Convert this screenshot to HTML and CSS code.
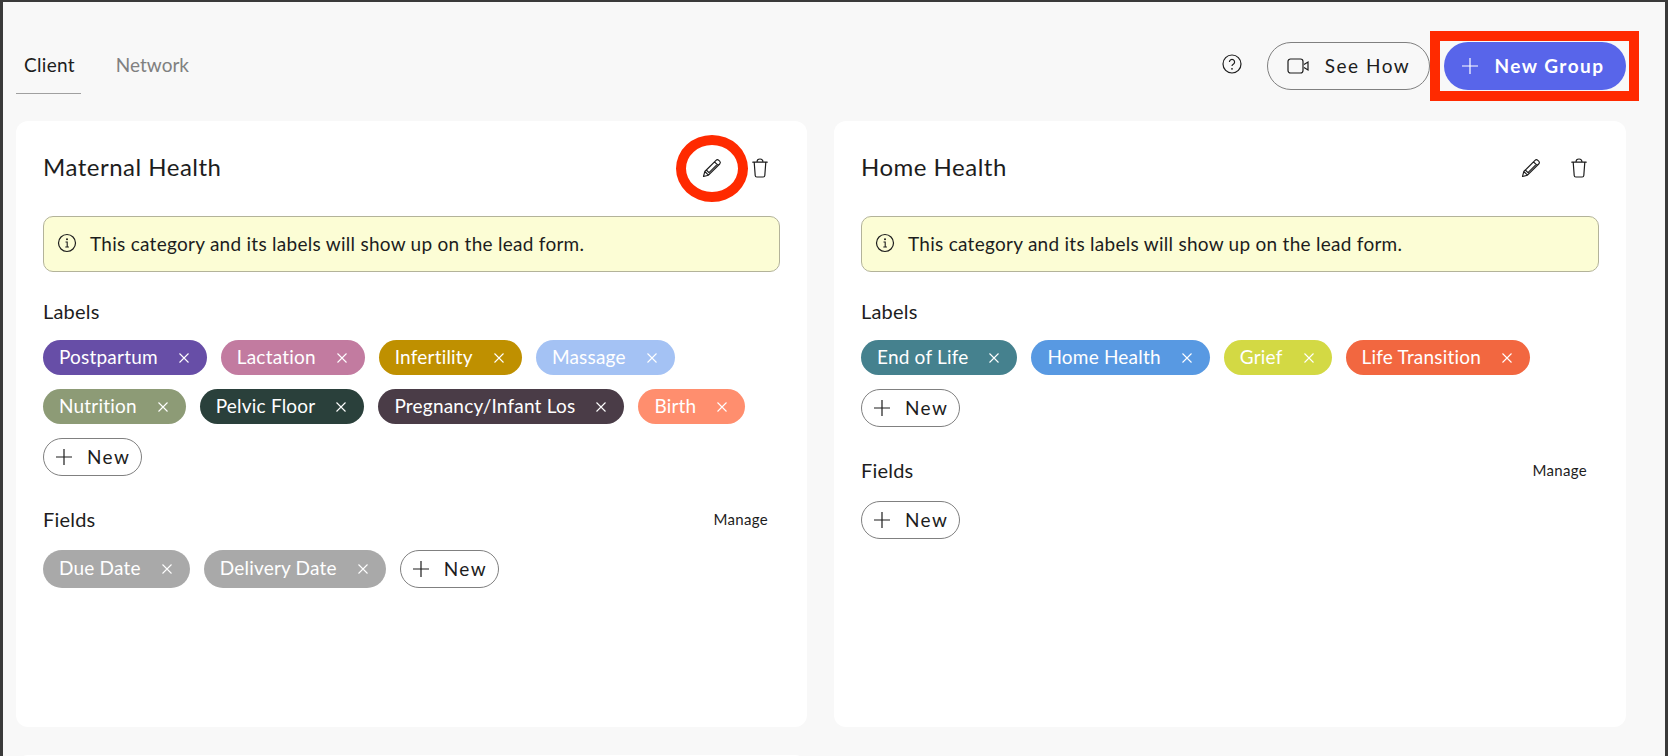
FILE: index.html
```html
<!DOCTYPE html>
<html lang="en">
<head>
<meta charset="utf-8">
<title>Groups</title>
<link rel="stylesheet" href="styles.css">
</head>
<body>
<svg class="defs" width="0" height="0" aria-hidden="true">
  <symbol id="i-x" viewBox="0 0 12 12"><path d="M1.5 1.5l9 9M10.500 1.500l-9 9" fill="none" stroke="currentColor" stroke-width="1.100"/></symbol>
  <symbol id="i-plus" viewBox="0 0 18 18"><path d="M9 1v16M1 9h16" fill="none" stroke="currentColor" stroke-width="1.200"/></symbol>
  <symbol id="i-info" viewBox="0 0 20 20"><circle cx="10" cy="10" r="8.500" fill="none" stroke="currentColor" stroke-width="1.200"/><path d="M8.500 9h1.700v5M8.300 14h3.600" fill="none" stroke="currentColor" stroke-width="1.100"/><circle cx="10" cy="6.200" r="1" fill="currentColor"/></symbol>
  <symbol id="i-pencil" viewBox="0 0 20 20"><path d="M1.500 18.500l1.300-5L14 2.300a2 2 0 0 1 2.800 0l.9.900a2 2 0 0 1 0 2.800L6.500 17.200zM2.800 13.500l3.700 3.700M4.300 12l3.700 3.700M12.500 3.800l3.700 3.700M5.400 11l7.900-7.900M7 14.700l8-8" fill="none" stroke="currentColor" stroke-width="1.100" stroke-linejoin="round"/></symbol>
  <symbol id="i-trash" viewBox="0 0 16 20"><path d="M.8 4.200h14.400M2.200 4.200l1 13.300a1.600 1.600 0 0 0 1.600 1.500h6.400a1.600 1.600 0 0 0 1.600-1.500l1-13.300M5 4.200C5 2 6 1 8 1s3 1 3 3.200" fill="none" stroke="currentColor" stroke-width="1.200" stroke-linecap="round"/></symbol>
</svg>
<div class="app">
  <header class="topbar">
    <nav class="tabs">
      <a class="tab tab-active">Client</a>
      <a class="tab">Network</a>
    </nav>
    <div class="actions">
      <svg class="help" viewBox="0 0 20 20"><circle cx="10" cy="10" r="9" fill="none" stroke="currentColor" stroke-width="1.200"/><path d="M7.400 7.900a2.600 2.600 0 1 1 3.900 2.300c-.9.500-1.300 1-1.300 1.900" fill="none" stroke="currentColor" stroke-width="1.200"/><circle cx="10" cy="14.800" r=".9" fill="currentColor"/></svg>
      <button class="btn btn-outline">
        <svg class="cam" viewBox="0 0 24 18"><rect x="1" y="2" width="15" height="14" rx="2.500" fill="none" stroke="currentColor" stroke-width="1.200"/><path d="M17 7.500l4-2.500v8l-4-2.500" fill="none" stroke="currentColor" stroke-width="1.200"/></svg>
        See How
      </button>
      <button class="btn btn-primary"><svg class="plus"><use href="#i-plus"/></svg>New Group</button>
    </div>
  </header>

  <main class="cards">
    <section class="card">
      <div class="card-head">
        <h2 class="card-title">Maternal Health</h2>
        <div class="card-tools">
          <svg class="tool"><use href="#i-pencil"/></svg>
          <svg class="tool tool-trash"><use href="#i-trash"/></svg>
        </div>
      </div>
      <div class="notice"><svg class="info"><use href="#i-info"/></svg>This category and its labels will show up on the lead form.</div>
      <div class="sec-head"><span>Labels</span></div>
      <div class="chips">
        <span class="chip c-purple">Postpartum<svg class="x"><use href="#i-x"/></svg></span>
        <span class="chip c-pink">Lactation<svg class="x"><use href="#i-x"/></svg></span>
        <span class="chip c-gold">Infertility<svg class="x"><use href="#i-x"/></svg></span>
        <span class="chip c-sky">Massage<svg class="x"><use href="#i-x"/></svg></span>
        <span class="chip c-sage">Nutrition<svg class="x"><use href="#i-x"/></svg></span>
        <span class="chip c-forest">Pelvic Floor<svg class="x"><use href="#i-x"/></svg></span>
        <span class="chip c-plum">Pregnancy/Infant Los<svg class="x"><use href="#i-x"/></svg></span>
        <span class="chip c-coral">Birth<svg class="x"><use href="#i-x"/></svg></span>
        <button class="new"><svg class="plus"><use href="#i-plus"/></svg>New</button>
      </div>
      <div class="sec-head sec-fields"><span>Fields</span><a class="manage">Manage</a></div>
      <div class="chips">
        <span class="chip c-grey">Due Date<svg class="x"><use href="#i-x"/></svg></span>
        <span class="chip c-grey">Delivery Date<svg class="x"><use href="#i-x"/></svg></span>
        <button class="new"><svg class="plus"><use href="#i-plus"/></svg>New</button>
      </div>
    </section>

    <section class="card">
      <div class="card-head">
        <h2 class="card-title">Home Health</h2>
        <div class="card-tools">
          <svg class="tool"><use href="#i-pencil"/></svg>
          <svg class="tool tool-trash"><use href="#i-trash"/></svg>
        </div>
      </div>
      <div class="notice"><svg class="info"><use href="#i-info"/></svg>This category and its labels will show up on the lead form.</div>
      <div class="sec-head"><span>Labels</span></div>
      <div class="chips">
        <span class="chip c-teal">End of Life<svg class="x"><use href="#i-x"/></svg></span>
        <span class="chip c-blue">Home Health<svg class="x"><use href="#i-x"/></svg></span>
        <span class="chip c-lime">Grief<svg class="x"><use href="#i-x"/></svg></span>
        <span class="chip c-orange">Life Transition<svg class="x"><use href="#i-x"/></svg></span>
        <button class="new"><svg class="plus"><use href="#i-plus"/></svg>New</button>
      </div>
      <div class="sec-head sec-fields"><span>Fields</span><a class="manage">Manage</a></div>
      <div class="chips">
        <button class="new"><svg class="plus"><use href="#i-plus"/></svg>New</button>
      </div>
    </section>

    <section class="card"></section>
  </main>

  <div class="mark mark-box"></div>
  <div class="mark mark-ring"></div>
</div>
</body>
</html>
```

FILE: styles.css
```css
* { box-sizing: border-box; }
html, body { margin: 0; height: 100%; overflow: hidden; }
body { font-family: "Lato", "Liberation Sans", sans-serif; color: #1d1d1d; background: #f8f8f8; }
.defs { position: absolute; }
.app {
  position: relative;
  height: 756px;
  overflow: hidden;
  background: #f8f8f8;
  border-top: 2px solid #3a3a3a;
  border-left: 3px solid #3a3a3a;
  border-right: 3px solid #3a3a3a;
  padding: 0 39px 0 13px;
}
.topbar { display: flex; justify-content: space-between; align-items: flex-start; height: 119px; padding-top: 40px; }
.tabs { display: flex; }
.tab { display: block; font-size: 19px; height: 52px; padding: 11px 6px 0 8px; color: #808080; margin-right: 27px; }
.tab-active { color: #1d1d1d; border-bottom: 1px solid #a0a0a0; letter-spacing: .3px; }
.actions { display: flex; align-items: center; }
.help { width: 20px; height: 20px; margin-right: 25px; margin-top: -4px; color: #1d1d1d; }
.btn { display: flex; align-items: center; justify-content: center; height: 48px; padding: 0 0 2px; border-radius: 24px; font-family: inherit; font-size: 19px; letter-spacing: 1.500px; cursor: pointer; }
.btn-outline { width: 163px; background: transparent; border: 1px solid #808080; color: #1d1d1d; margin-right: 14px; }
.cam { width: 24px; height: 18px; margin-right: 14px; margin-top: 2px; }
.btn-primary { width: 182px; background: #5865ea; border: 0; color: #fff; font-weight: 700; padding-right: 4px; }
.btn-primary .plus { width: 18px; height: 18px; margin-right: 15px; margin-top: 2px; }
.cards { display: grid; grid-template-columns: 791px 792px; gap: 28px 27px; }
.card { height: 606px; background: #fff; border-radius: 12px; padding: 0 27px; }
.card-head { display: flex; justify-content: space-between; align-items: center; height: 95px; padding-bottom: 4px; }
.card-title { margin: 0; font-size: 24px; font-weight: 400; letter-spacing: .5px; }
.card-tools { display: flex; align-items: center; gap: 30px; margin-right: 12px; margin-top: 3px; }
.tool { width: 20px; height: 20px; display: block; }
.tool-trash { width: 16px; }
.notice { display: flex; align-items: center; height: 56px; background: #fcfdd5; border: 1px solid #b3b39a; border-radius: 10px; padding: 0 13px 2px; font-size: 19px; letter-spacing: .27px; }
.info { width: 20px; height: 20px; margin-right: 13px; flex: none; }
.sec-head { display: flex; justify-content: space-between; align-items: center; height: 22px; margin-top: 28px; margin-bottom: 18px; font-size: 20px; letter-spacing: .2px; }
.sec-fields { margin-top: 32px; margin-bottom: 20px; }
.manage { font-size: 15px; margin-right: 12px; letter-spacing: .3px; }
.chips { display: flex; flex-wrap: wrap; gap: 14px; }
.chip { display: flex; align-items: center; justify-content: space-between; min-height: 35px; padding: 0 17px 3px 16px; border-radius: 20px; color: #fff; font-size: 19px; letter-spacing: .2px; }
.x { width: 12px; height: 12px; margin-left: 20px; margin-top: 3px; flex: none; }
.new { display: flex; align-items: center; width: 99px; height: 38px; padding: 0 0 2px 11px; background: #fff; border: 1px solid #808080; border-radius: 20px; font-family: inherit; font-size: 19px; letter-spacing: 1.400px; color: #1d1d1d; cursor: pointer; }
.new .plus { width: 18px; height: 18px; margin-right: 14px; margin-top: 2px; }
.c-purple { background: #674ea7; }
.c-pink { background: #c27ba0; }
.c-gold { background: #bf9000; }
.c-sky { background: #a4c2f4; }
.c-sage { background: #8d9b76; }
.c-forest { background: #2a403b; }
.c-plum { background: #4a3c47; }
.c-coral { background: #ff8e6e; }
.c-grey { background: #a9a9a9; }
.c-teal { background: #45818e; }
.c-blue { background: #5899e2; }
.c-lime { background: #d3d944; }
.c-orange { background: #f26740; }
.mark { position: absolute; pointer-events: none; }
.mark-box { left: 1427px; top: 29px; width: 209px; height: 70px; border: 10px solid #ff2a00; }
.mark-ring { left: 673px; top: 133px; width: 72px; height: 67px; border: 10px solid #ff2a00; border-radius: 50%; }
```
